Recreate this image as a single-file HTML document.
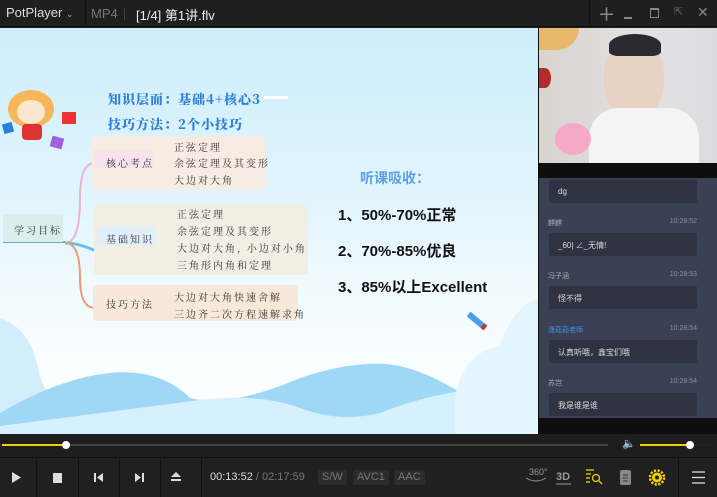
<!DOCTYPE html>
<html><head><meta charset="utf-8"><style>
*{margin:0;padding:0;box-sizing:border-box}
body{width:717px;height:497px;background:#1c1c1c;position:relative;overflow:hidden;font-family:"Liberation Sans","Noto Sans CJK SC",sans-serif}
.abs{position:absolute}
.t{position:absolute;white-space:nowrap}
.mm{font-family:"Noto Serif CJK SC",serif;color:#333;font-size:10px;letter-spacing:2px}
.chat .b{position:absolute;left:10px;width:148px;height:23px;background:#2e3241;border-radius:2px;color:#ddd;font-size:8px;padding:7px 0 0 9px}
.chat .n{position:absolute;left:9px;font-size:7px;color:#aab}
.chat .tm{position:absolute;right:20px;font-size:7px;color:#8890a0}
.tag{position:absolute;top:470px;height:15px;background:#2c2c2c;color:#777;font-size:11px;padding:1px 4px;border-radius:2px}
.sep{position:absolute;top:458px;width:1px;height:39px;background:#111}
</style></head><body>
<div class="abs" style="left:0;top:0;width:717px;height:27px;background:#1f1f1f;border-bottom:1px solid #111"></div>
<div class="t" style="left:6px;top:5px;color:#ddd;font-size:13px">PotPlayer <span style="font-size:9px;color:#aaa">&#8964;</span></div>
<div class="abs" style="left:85px;top:0;width:1px;height:27px;background:#111"></div>
<div class="t" style="left:91px;top:6px;color:#777;font-size:13px">MP4</div>
<div class="abs" style="left:124px;top:8px;width:1px;height:12px;background:#444"></div>
<div class="t" style="left:136px;top:5px;color:#eee;font-size:13px">[1/4] 第1讲.flv</div>
<div class="abs" style="left:589px;top:0;width:1px;height:27px;background:#111"></div>
<div class="t" style="left:600px;top:4px;color:#888;font-size:13px">&#9547;</div>
<div class="abs" style="left:624px;top:17px;width:8px;height:2px;background:#888"></div>
<div class="abs" style="left:650px;top:8px;width:9px;height:10px;border:1px solid #888;border-top-width:2px"></div>
<div class="t" style="left:674px;top:5px;color:#666;font-size:11px">&#8689;</div>
<div class="t" style="left:697px;top:4px;color:#888;font-size:14px">&#10005;</div>

<div class="abs" style="left:0;top:28px;width:538px;height:406px;background:linear-gradient(#cdeefc 0%,#e3f5fd 45%,#f4fcff 70%,#ffffff 100%);overflow:hidden">
<svg class="abs" style="left:0;top:0" width="538" height="406">
<path d="M0 290 Q30 300 38 340 Q45 380 100 400 L0 406Z" fill="#d2eefc"/>
<path d="M0 385 Q60 350 110 345 Q160 340 190 370 Q230 380 300 350 Q360 330 400 338 Q430 345 470 370 L470 406 L0 406Z" fill="#9fd8f7"/>
<path d="M0 398 Q100 385 200 372 Q260 365 300 380 Q340 395 380 385 Q440 360 538 355 L538 406 L0 406Z" fill="#d6f0fd"/>
<path d="M455 370 Q462 325 500 318 Q512 280 538 270 L538 406 L455 406Z" fill="#e3f5fe"/>
<path d="M65 215 Q80 215 80 170 Q80 135 95 135" stroke="#f0b0cf" stroke-width="2" fill="none"/>
<path d="M65 215 Q80 215 100 225" stroke="#6cc0ef" stroke-width="3" fill="none"/>
<path d="M65 215 Q80 215 80 250 Q80 280 95 280" stroke="#ef9b72" stroke-width="2" fill="none"/>
<line x1="3" y1="214" x2="65" y2="214" stroke="#3a9a9a" stroke-width="1.5"/>
</svg>
<div class="abs" style="left:3px;top:186px;width:60px;height:28px;background:#dbeeed"></div>
<div class="t mm" style="left:14px;top:194px">学习目标</div>
<div class="abs" style="left:92px;top:108px;width:173px;height:54px;background:#f7ece2;border-radius:4px"></div>
<div class="abs" style="left:94px;top:122px;width:60px;height:18px;background:#f8e3ec"></div>
<div class="t mm" style="left:106px;top:127px">核心考点</div>
<div class="t mm" style="left:174px;top:111px">正弦定理</div>
<div class="t mm" style="left:174px;top:127px">余弦定理及其变形</div>
<div class="t mm" style="left:174px;top:144px">大边对大角</div>
<div class="abs" style="left:94px;top:177px;width:214px;height:70px;background:#f2eee4;border-radius:4px"></div>
<div class="abs" style="left:97px;top:198px;width:58px;height:20px;background:#e1effa"></div>
<div class="t mm" style="left:106px;top:203px">基础知识</div>
<div class="t mm" style="left:177px;top:178px">正弦定理</div>
<div class="t mm" style="left:177px;top:195px">余弦定理及其变形</div>
<div class="t mm" style="left:177px;top:212px">大边对大角, 小边对小角</div>
<div class="t mm" style="left:177px;top:229px">三角形内角和定理</div>
<div class="abs" style="left:93px;top:257px;width:205px;height:36px;background:#f8e8d9;border-radius:4px"></div>
<div class="t mm" style="left:106px;top:268px">技巧方法</div>
<div class="t mm" style="left:174px;top:261px">大边对大角快速舍解</div>
<div class="t mm" style="left:174px;top:278px">三边齐二次方程速解求角</div>
<div class="t" style="left:108px;top:61px;color:#2f7fd6;font-size:13px;font-weight:900;font-family:'Noto Serif CJK SC',serif;letter-spacing:1px">知识层面：基础4+核心3</div>
<div class="t" style="left:108px;top:86px;color:#2f7fd6;font-size:13px;font-weight:900;font-family:'Noto Serif CJK SC',serif;letter-spacing:1px">技巧方法：2个小技巧</div>
<div class="abs" style="left:264px;top:68px;width:24px;height:3px;background:#fff"></div>
<div class="abs" style="left:8px;top:62px;width:46px;height:38px;background:#f5b75a;border-radius:50%"></div>
<div class="abs" style="left:17px;top:72px;width:28px;height:24px;background:#fbe7cf;border-radius:50%"></div>
<div class="abs" style="left:22px;top:96px;width:20px;height:16px;background:#d33;border-radius:4px"></div>
<div class="abs" style="left:62px;top:84px;width:14px;height:12px;background:#e33"></div>
<div class="abs" style="left:3px;top:95px;width:10px;height:10px;background:#2a7fe0;transform:rotate(-15deg)"></div>
<div class="abs" style="left:51px;top:109px;width:12px;height:11px;background:#a05ee0;transform:rotate(15deg)"></div>
<div class="t" style="left:360px;top:140px;color:#5d9fe0;font-size:14px;font-weight:bold">听课吸收：</div>
<div class="t" style="left:338px;top:176px;color:#111;font-size:15px;font-weight:bold">1、50%-70%正常</div>
<div class="t" style="left:338px;top:212px;color:#111;font-size:15px;font-weight:bold">2、70%-85%优良</div>
<div class="t" style="left:338px;top:248px;color:#111;font-size:15px;font-weight:bold">3、85%以上Excellent</div>
<div class="abs" style="left:466px;top:290px;width:22px;height:6px;background:#4aa0e8;transform:rotate(40deg);border-right:4px solid #c33"></div>
</div>

<div class="abs" style="left:538px;top:28px;width:179px;height:406px;background:#0e0e0e"></div>
<div class="abs" style="left:539px;top:28px;width:178px;height:135px;background:linear-gradient(90deg,#d8d4cf,#e2e2e4 60%,#dcdcde);overflow:hidden">
 <div class="abs" style="left:65px;top:10px;width:60px;height:80px;background:#e8d2c4;border-radius:45%"></div>
 <div class="abs" style="left:70px;top:6px;width:52px;height:22px;background:#2a2a30;border-radius:50% 50% 20% 20%"></div>
 <div class="abs" style="left:50px;top:80px;width:110px;height:55px;background:#f4f4f4;border-radius:30px 30px 0 0"></div>
 <div class="abs" style="left:16px;top:95px;width:36px;height:32px;background:#f5a9c5;border-radius:50%"></div>
 <div class="abs" style="left:0;top:0;width:40px;height:22px;background:#e8b86a;border-radius:0 0 40px 0"></div>
 <div class="abs" style="left:0;top:40px;width:12px;height:20px;background:#b52a2a;border-radius:0 50% 50% 0"></div>
</div>
<div class="abs chat" style="left:539px;top:178px;width:178px;height:240px;background:#3b4154">
 <div class="b" style="top:2px">dg</div>
 <div class="n" style="top:40px">麒麒</div><div class="tm" style="top:40px">10:28:52</div>
 <div class="b" style="top:55px">_60| ∠_无情!</div>
 <div class="n" style="top:93px">冯子涵</div><div class="tm" style="top:93px">10:28:53</div>
 <div class="b" style="top:108px">怪不得</div>
 <div class="n" style="top:147px;color:#4a8ff0">潇茹茹老师</div><div class="tm" style="top:147px">10:28:54</div>
 <div class="b" style="top:162px">认真听哦，鑫宝们哦</div>
 <div class="n" style="top:200px">苏岂</div><div class="tm" style="top:200px">10:28:54</div>
 <div class="b" style="top:215px">我是谁是谁</div>
</div>

<div class="abs" style="left:0;top:434px;width:717px;height:24px;background:#1e1e1e;border-bottom:1px solid #111"></div>
<div class="abs" style="left:2px;top:444px;width:606px;height:2px;background:#444"></div>
<div class="abs" style="left:2px;top:444px;width:64px;height:2px;background:#f2d000"></div>
<div class="abs" style="left:62px;top:441px;width:8px;height:8px;background:#fff;border-radius:50%"></div>
<div class="t" style="left:622px;top:437px;color:#888;font-size:11px">&#128264;</div>
<div class="abs" style="left:640px;top:444px;width:73px;height:2px;background:#222"></div>
<div class="abs" style="left:640px;top:444px;width:50px;height:2px;background:#f2d000"></div>
<div class="abs" style="left:686px;top:441px;width:8px;height:8px;background:#fff;border-radius:50%"></div>

<div class="abs" style="left:0;top:458px;width:717px;height:39px;background:#202020"></div>
<div class="sep" style="left:36px"></div><div class="sep" style="left:78px"></div><div class="sep" style="left:119px"></div><div class="sep" style="left:160px"></div><div class="sep" style="left:201px"></div><div class="sep" style="left:678px"></div>
<svg class="abs" style="left:0;top:458px" width="717" height="39">
<path d="M12 14 L21 19.5 L12 25Z" fill="#ddd"/>
<rect x="53" y="15" width="9" height="10" fill="#ddd"/>
<rect x="94" y="15" width="2" height="9" fill="#ddd"/><path d="M103 15 L97 19.5 L103 24Z" fill="#ddd"/>
<path d="M135 15 L141 19.5 L135 24Z" fill="#ddd"/><rect x="142" y="15" width="2" height="9" fill="#ddd"/>
<path d="M176 14 L181 19 L171 19Z" fill="#ddd"/><rect x="171" y="21" width="10" height="2" fill="#ddd"/>
<text x="529" y="17" fill="#999" font-size="9" font-family="Liberation Sans">360°</text>
<path d="M526 20 Q536 26 546 20" stroke="#999" fill="none"/>
<text x="556" y="22" fill="#999" font-size="11" font-weight="bold" font-family="Liberation Sans">3D</text>
<line x1="556" y1="26" x2="571" y2="26" stroke="#999"/>
<g stroke="#f2d000" stroke-width="1.3" fill="none"><line x1="586" y1="12" x2="594" y2="12"/><line x1="586" y1="16" x2="591" y2="16"/><line x1="586" y1="20" x2="590" y2="20"/><line x1="586" y1="24" x2="590" y2="24"/><circle cx="596" cy="20" r="3.5"/><line x1="599" y1="23" x2="602" y2="26"/></g>
<rect x="620" y="12" width="11" height="15" rx="2" fill="#888"/><g stroke="#333"><line x1="623" y1="17" x2="628" y2="17"/><line x1="623" y1="20" x2="628" y2="20"/><line x1="623" y1="23" x2="628" y2="23"/></g>
<circle cx="657" cy="19.5" r="5" fill="#f2d000"/><circle cx="657" cy="19.5" r="7" fill="none" stroke="#f2d000" stroke-width="2.5" stroke-dasharray="2.2 1.5"/><circle cx="657" cy="19.5" r="2" fill="#202020"/>
<g stroke="#ddd" stroke-width="1.3"><line x1="692" y1="14" x2="705" y2="14"/><line x1="692" y1="19.5" x2="705" y2="19.5"/><line x1="692" y1="25" x2="705" y2="25"/></g>
</svg>
<div class="t" style="left:210px;top:471px;color:#ddd;font-size:11px">00:13:52 <span style="color:#777">/ 02:17:59</span></div>
<div class="tag" style="left:318px">S/W</div>
<div class="tag" style="left:353px">AVC1</div>
<div class="tag" style="left:394px">AAC</div>
</body></html>
